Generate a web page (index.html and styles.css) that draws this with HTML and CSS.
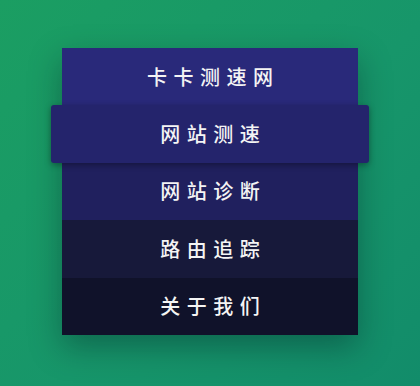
FILE: index.html
```html
<!DOCTYPE html>
<html lang="zh">
<head>
<meta charset="utf-8">
<title>卡卡测速网</title>
<link rel="stylesheet" href="styles.css">
</head>
<body>
<div class="stage">
  <ul class="menu">
    <li class="item item-1">卡卡测速网</li>
    <li class="item item-2 active">网站测速</li>
    <li class="item item-3">网站诊断</li>
    <li class="item item-4">路由追踪</li>
    <li class="item item-5">关于我们</li>
  </ul>
</div>
</body>
</html>
```
FILE: styles.css
```css
html, body {
  margin: 0;
  padding: 0;
  width: 420px;
  height: 386px;
  overflow: hidden;
}
body {
  background: linear-gradient(135deg, #1b9e62 0%, #17966a 55%, #128c6a 100%);
  font-family: "Noto Sans CJK SC", "Noto Sans", sans-serif;
}
.stage {
  display: flex;
  justify-content: center;
  padding-top: 48px;
}
.menu {
  list-style: none;
  margin: 0;
  padding: 0;
  width: 296px;
  display: flex;
  flex-direction: column;
  box-shadow: 0 12px 30px rgba(0, 20, 30, 0.35);
}
.item {
  height: 57.4px;
  display: flex;
  align-items: center;
  justify-content: center;
  color: #f4f4f4;
  font-size: 20px;
  font-weight: 500;
  letter-spacing: 6.5px;
  text-indent: 6.5px;
  line-height: 1;
}
.item-1 { background: #29297a; }
.item-2 { background: #24246c; }
.item-3 { background: #20205e; }
.item-4 { background: #17193a; }
.item-5 { background: #10122a; }
.item.active {
  margin: 0 -11px;
  border-radius: 3px;
  position: relative;
  box-shadow: 0 2px 6px rgba(0, 0, 0, 0.35);
}
```
